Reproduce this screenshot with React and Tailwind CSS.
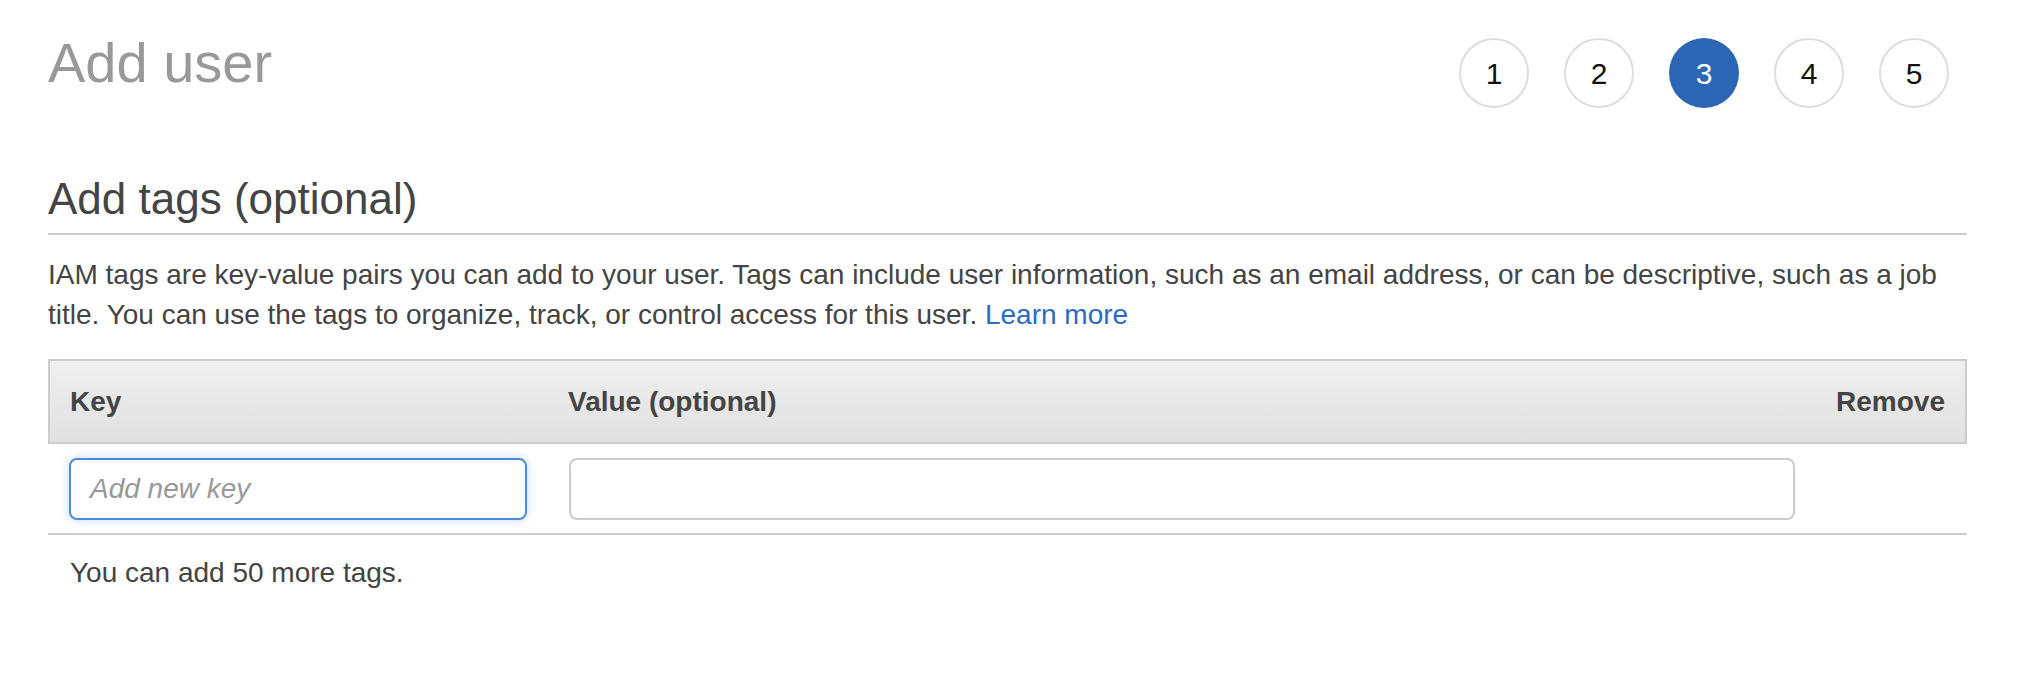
import React from "react";

const font = { fontFamily: '"Liberation Sans", Arial, Helvetica, sans-serif' };

function Step({ n, active }) {
  return (
    <div
      className={
        active
          ? "flex h-[70px] w-[70px] items-center justify-center rounded-full bg-[#2d66b5] text-[30px] text-white"
          : "flex h-[70px] w-[70px] items-center justify-center rounded-full border-2 border-[#dddddd] bg-white text-[30px] text-[#111]"
      }
    >
      {n}
    </div>
  );
}

export default function App() {
  return (
    <div className="min-h-[680px] w-[2032px] bg-white pl-[48px] pr-[65px]" style={font}>
      <div className="flex items-start justify-between pt-[35px]">
        <h1 className="text-[56px] leading-[56px] text-[#999999]">Add user</h1>
        <div className="mr-[18px] mt-[3px] flex gap-[35px]">
          {[1, 2, 3, 4, 5].map((n) => (
            <Step key={n} n={n} active={n === 3} />
          ))}
        </div>
      </div>

      <h2 className="mt-[64px] border-b-2 border-[#cccccc] pb-[8px] text-[44px] leading-[53px] text-[#444444]">
        Add tags (optional)
      </h2>

      <p className="mt-[20px] text-[28px] leading-[40px] text-[#444444]">
        IAM tags are key-value pairs you can add to your user. Tags can include user information, such as an email
        address, or can be descriptive, such as a job title. You can use the tags to organize, track, or control access
        for this user. <span className="text-[#2b6bc3]">Learn more</span>
      </p>

      <div className="mt-[24px]">
        <div className="grid h-[85px] grid-cols-[498px_1fr_149px] items-center border-2 border-[#cccccc] bg-linear-to-b from-[#efefef] to-[#e1e1e1] text-[28px] font-bold text-[#444444]">
          <div className="pl-[20px]">Key</div>
          <div className="pl-[20px]">Value (optional)</div>
          <div className="pr-[20px] text-right">Remove</div>
        </div>
        <div className="grid grid-cols-[500px_1fr_151px] border-b-2 border-[#cccccc] pb-[13px] pt-[14px]">
          <div className="pl-[21px] pr-[21px]">
            <div className="flex h-[62px] items-center rounded-[8px] border-2 border-[#4b8ce0] bg-white pl-[19px] shadow-[0_0_10px_rgba(80,145,230,0.35)]">
              <span className="text-[28px] italic text-[#999999]">Add new key</span>
            </div>
          </div>
          <div className="pl-[21px] pr-[21px]">
            <div className="h-[62px] rounded-[8px] border-2 border-[#cccccc] bg-white" />
          </div>
          <div />
        </div>
      </div>

      <p className="mt-[18px] pl-[22px] text-[28px] leading-[40px] text-[#444444]">You can add 50 more tags.</p>
    </div>
  );
}
